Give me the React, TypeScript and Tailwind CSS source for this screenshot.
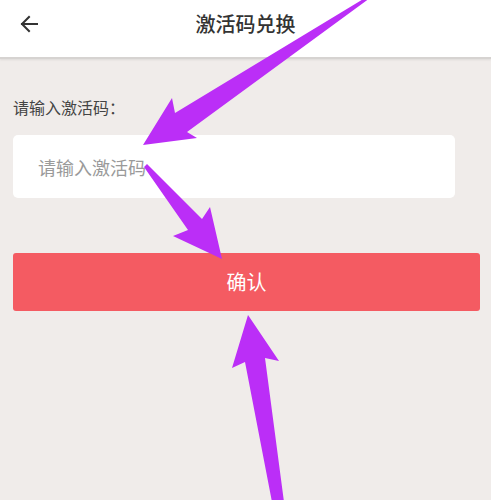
export default function App(): JSX.Element {
  return (
    <div
      className="relative w-[491px] h-[500px] overflow-hidden bg-[#f0ecea]"
      style={{ fontFamily: '"Noto Sans CJK SC", "Noto Sans", sans-serif' }}
    >
      <header className="relative h-[59px] pb-[9px] bg-white flex items-center justify-center border-b-2 border-[#d6d3d1] shadow-[0_1px_2px_rgba(0,0,0,0.08)]">
        <button aria-label="返回" className="absolute left-[20px] top-[15px] w-[18px] h-[18px] text-[#333]">
          <svg viewBox="0 0 18 18" width="18" height="18" fill="none" stroke="currentColor" strokeWidth="2" strokeLinecap="square">
            <path d="M17 9H2" />
            <path d="M9 2L2 9l7 7" />
          </svg>
        </button>
        <h1 className="text-[20px] font-medium text-[#333] leading-none">激活码兑换</h1>
      </header>

      <main className="px-[13px]">
        <div className="mt-[37px] text-[16px] leading-[22px] text-[#444]">请输入激活码：</div>
        <input
          className="mt-[17px] block w-[442px] h-[63px] rounded-[5px] bg-white px-[25px] text-[18px] text-[#333] placeholder:text-[#9a9a9a] outline-none"
          placeholder="请输入激活码"
        />
        <button className="mt-[55px] w-[467px] h-[58px] rounded-[3px] bg-[#f45b62] text-white text-[20px]">确认</button>
      </main>

      {/* pointer arrows drawn over the form */}
      <svg className="absolute inset-0 pointer-events-none" width="491" height="500" viewBox="0 0 491 500">
        <g fill="#bb2ef7" strokeLinejoin="round">
          <polygon points="365,-2 175,113 172,98 143,145 197,138 187,132 370,-2" />
          <polygon points="147,164 202,219 210,207 222,259 173,236 188,230 144,167" />
          <polygon points="248,315 279,361 265,358 284,502 272,502 245,362 232,368" />
        </g>
      </svg>
    </div>
  );
}
